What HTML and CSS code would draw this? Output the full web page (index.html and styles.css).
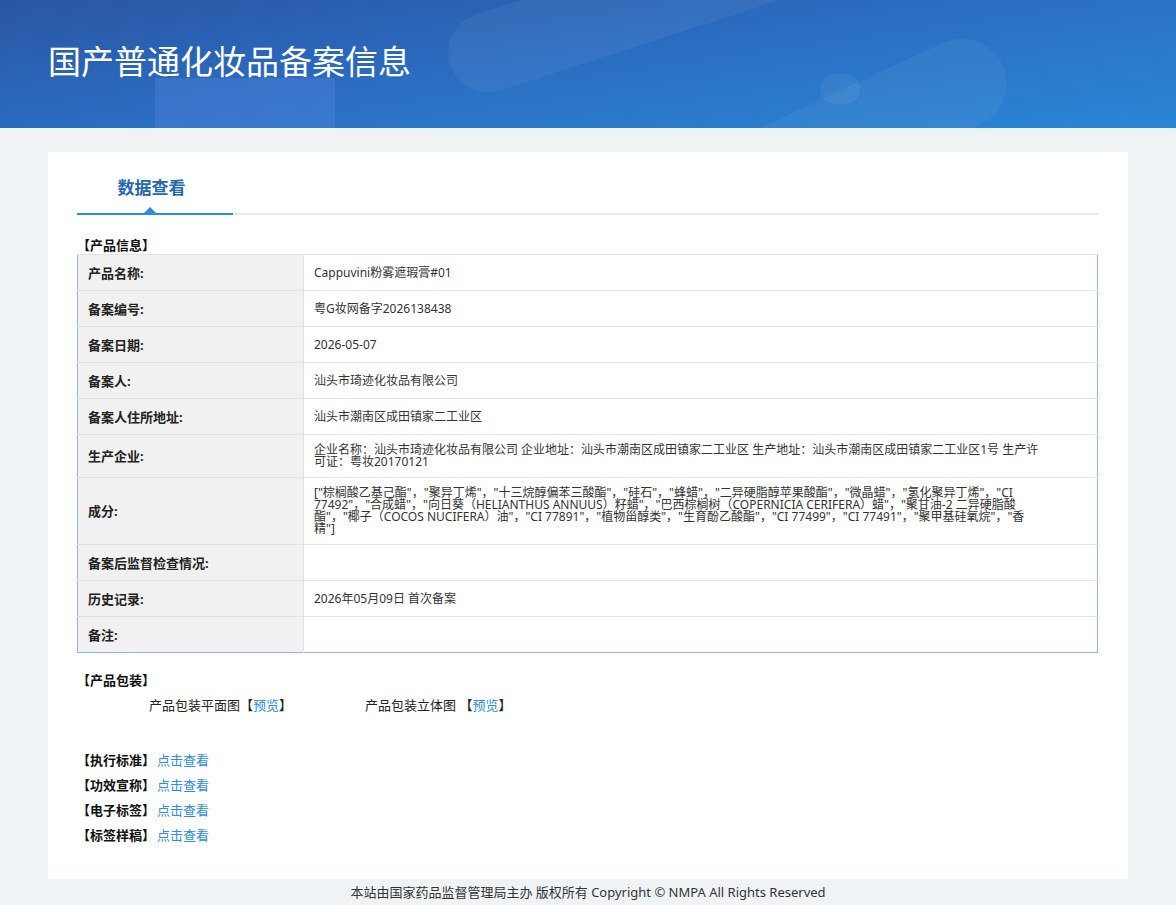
FILE: index.html
```html
<!DOCTYPE html>
<html lang="zh-CN">
<head>
    <meta charset="UTF-8">
    <title>国产普通化妆品备案信息</title>
    <link rel="stylesheet" href="styles.css">
</head>
<body>
    <div class="header">
        <span class="deco deco-a"></span>
        <span class="deco deco-b"></span>
        <span class="deco deco-c"></span>
        <span class="deco deco-d"></span>
        <h1>国产普通化妆品备案信息</h1>
    </div>
    <div class="card">
        <div class="tab-bar">
            <div class="tab">数据查看</div>
        </div>
        <div class="section-title first">【产品信息】</div>
        <table class="info">
            <tr><td class="label">产品名称:</td><td class="value">Cappuvini粉雾遮瑕膏#01</td></tr>
            <tr><td class="label">备案编号:</td><td class="value">粤G妆网备字2026138438</td></tr>
            <tr><td class="label">备案日期:</td><td class="value">2026-05-07</td></tr>
            <tr><td class="label">备案人:</td><td class="value">汕头市琦迹化妆品有限公司</td></tr>
            <tr><td class="label">备案人住所地址:</td><td class="value">汕头市潮南区成田镇家二工业区</td></tr>
            <tr><td class="label">生产企业:</td><td class="value">企业名称：汕头市琦迹化妆品有限公司 企业地址：汕头市潮南区成田镇家二工业区 生产地址：汕头市潮南区成田镇家二工业区1号 生产许可证：粤妆20170121</td></tr>
            <tr><td class="label">成分:</td><td class="value">["棕榈酸乙基己酯"，"聚异丁烯"，"十三烷醇偏苯三酸酯"，"硅石"，"蜂蜡"，"二异硬脂醇苹果酸酯"，"微晶蜡"，"氢化聚异丁烯"，"CI 77492"，"合成蜡"，"向日葵（HELIANTHUS ANNUUS）籽蜡"，"巴西棕榈树（COPERNICIA CERIFERA）蜡"，"聚甘油-2 二异硬脂酸酯"，"椰子（COCOS NUCIFERA）油"，"CI 77891"，"植物甾醇类"，"生育酚乙酸酯"，"CI 77499"，"CI 77491"，"聚甲基硅氧烷"，"香精"]</td></tr>
            <tr><td class="label">备案后监督检查情况:</td><td class="value"></td></tr>
            <tr><td class="label">历史记录:</td><td class="value">2026年05月09日 首次备案</td></tr>
            <tr><td class="label">备注:</td><td class="value"></td></tr>
        </table>
        <div class="section-title">【产品包装】</div>
        <div class="pack-row">
            <span>产品包装平面图【<a href="#">预览</a>】</span>
            <span>产品包装立体图 【<a href="#">预览</a>】</span>
        </div>
        <div class="doc-list">
            <div class="doc"><b>【执行标准】</b><a href="#">点击查看</a></div>
            <div class="doc"><b>【功效宣称】</b><a href="#">点击查看</a></div>
            <div class="doc"><b>【电子标签】</b><a href="#">点击查看</a></div>
            <div class="doc"><b>【标签样稿】</b><a href="#">点击查看</a></div>
        </div>
    </div>
    <div class="footer">本站由国家药品监督管理局主办 版权所有 Copyright © NMPA All Rights Reserved</div>
</body>
</html>
```
FILE: styles.css
```css
body {
    margin: 0;
    background-color: #eff3f6;
    font-family: "Noto Sans", "Noto Sans CJK SC", sans-serif;
    color: #333;
}
a {
    color: #2d8be0;
    text-decoration: none;
}
.header {
    position: relative;
    height: 128px;
    overflow: hidden;
    background: linear-gradient(172deg, #2a56a3 0%, #2b6cc0 45%, #2a86d6 100%);
}
.header h1 {
    position: relative;
    margin: 0;
    padding-left: 48px;
    line-height: 124px;
    font-size: 33px;
    font-weight: normal;
    color: #fff;
}
.deco {
    position: absolute;
    border-radius: 60px;
    background-color: rgba(255, 255, 255, 0.05);
}
.deco-a {
    left: 440px;
    top: -40px;
    width: 420px;
    height: 80px;
    transform: rotate(-18deg);
}
.deco-b {
    left: 640px;
    top: 100px;
    width: 380px;
    height: 90px;
    transform: rotate(-25deg);
}
.deco-c {
    left: 155px;
    top: 78px;
    width: 180px;
    height: 60px;
    border-radius: 0;
    background-color: rgba(90, 140, 230, 0.3);
}
.deco-d {
    left: 820px;
    top: 74px;
    width: 40px;
    height: 30px;
    background-color: rgba(255, 255, 255, 0.06);
}
.card {
    background-color: #fff;
    margin: 24px 48px 0;
    padding: 0 30px 31px 29px;
}
.tab-bar {
    border-bottom: 2px solid #e5e8ec;
}
.tab {
    position: relative;
    width: 149px;
    padding: 18px 7px 7px 0;
    margin-bottom: -2px;
    line-height: 36px;
    text-align: center;
    font-size: 17px;
    font-weight: bold;
    color: #2466b0;
    border-bottom: 2px solid #2d8be0;
}
.tab::after {
    content: "";
    position: absolute;
    left: 67px;
    bottom: 0;
    border-left: 6px solid transparent;
    border-right: 6px solid transparent;
    border-bottom: 6px solid #2d8be0;
}
.section-title {
    margin: 19px 0 4px;
    font-size: 13px;
    font-weight: bold;
    line-height: 16px;
    color: #111;
}
.section-title.first {
    margin: 22px 0 1px;
}
.info {
    width: 100%;
    border-collapse: collapse;
    border: 1px solid #93b5e6;
}
.info td {
    height: 17px;
    border-top: 1px solid #e2e2e2;
    padding: 9px 10px;
    line-height: 12px;
    vertical-align: middle;
}
.info .label {
    width: 205px;
    background-color: #f1f1f1;
    font-size: 13px;
    font-weight: bold;
    color: #222;
    border-right: 1px solid #e2e2e2;
}
.info .value {
    padding-right: 56px;
    font-size: 12px;
    color: #333;
}
.pack-row {
    display: flex;
    gap: 73px;
    padding-left: 72px;
    margin-top: 9px;
    font-size: 13px;
    line-height: 16px;
    color: #222;
}
.doc-list {
    margin-top: 35px;
}
.doc {
    line-height: 25px;
    font-size: 13px;
}
.doc b {
    color: #111;
    margin-right: 2px;
}
.footer {
    line-height: 26px;
    text-align: center;
    font-size: 13px;
    color: #333;
}
```
